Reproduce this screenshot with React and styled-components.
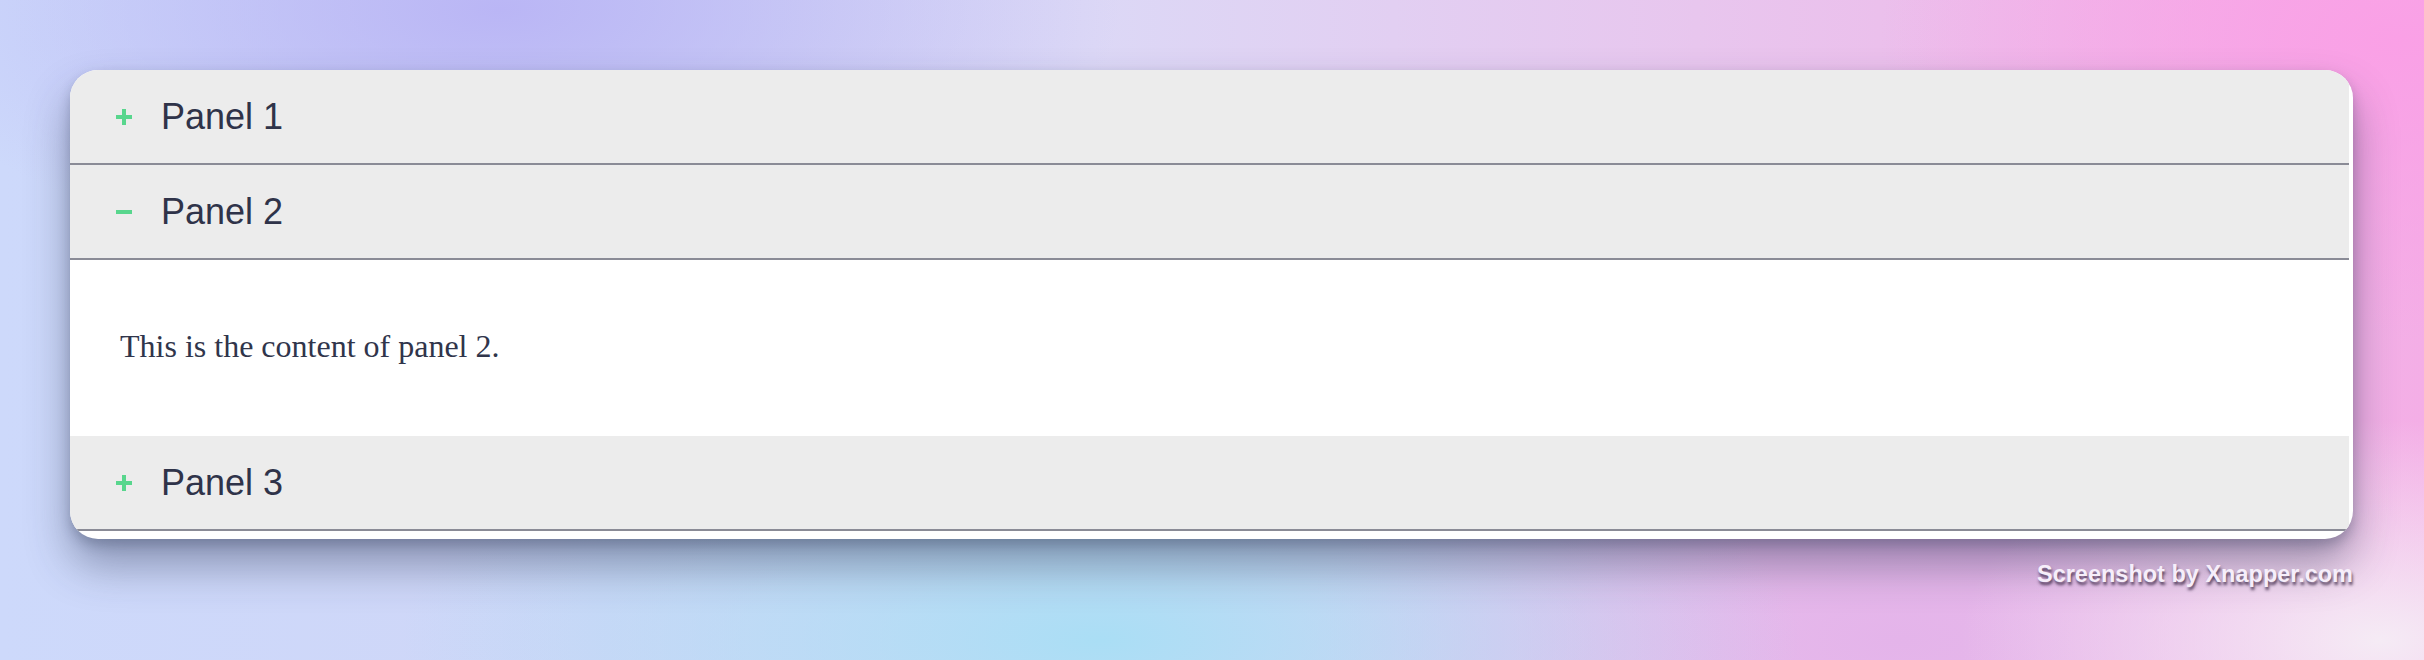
import styled, { createGlobalStyle } from "styled-components";
import { useState } from "react";

const GlobalStyle = createGlobalStyle`
  html, body {
    margin: 0;
    padding: 0;
  }
  body {
    width: 2424px;
    height: 660px;
    overflow: hidden;
    font-family: "Liberation Sans", Arial, sans-serif;
  }
`;

const panels = [
  { id: 1, title: "Panel 1", body: "This is the content of panel 1." },
  { id: 2, title: "Panel 2", body: "This is the content of panel 2." },
  { id: 3, title: "Panel 3", body: "This is the content of panel 3." },
];

export default function App() {
  const [open, setOpen] = useState(2);

  return (
    <>
      <GlobalStyle />
      <Backdrop>
        <Card>
          <Accordion>
            {panels.map((p) => (
              <Item key={p.id}>
                <Header onClick={() => setOpen(open === p.id ? null : p.id)}>
                  <Toggle open={open === p.id} />
                  <Title>{p.title}</Title>
                </Header>
                {open === p.id && (
                  <Content>
                    <p>{p.body}</p>
                  </Content>
                )}
              </Item>
            ))}
          </Accordion>
        </Card>
        <Watermark>Screenshot by Xnapper.com</Watermark>
      </Backdrop>
    </>
  );
}

function Toggle({ open }) {
  return (
    <Icon width="16" height="16" viewBox="0 0 16 16">
      <rect x="0" y="6" width="16" height="4" fill="#58d68d" />
      {!open && <rect x="6" y="0" width="4" height="16" fill="#58d68d" />}
    </Icon>
  );
}

const Backdrop = styled.div`
  width: 2424px;
  height: 660px;
  box-sizing: border-box;
  padding: 70px 71px 0 70px;
  display: flex;
  flex-direction: column;
  align-items: stretch;
  background:
    radial-gradient(ellipse 620px 260px at 500px 10px, rgba(185, 180, 245, 0.95), rgba(185, 180, 245, 0) 100%),
    radial-gradient(ellipse 700px 260px at 1100px 640px, rgba(170, 222, 245, 1), rgba(170, 222, 245, 0) 100%),
    radial-gradient(ellipse 520px 300px at 2400px 40px, rgba(250, 160, 230, 1), rgba(250, 160, 230, 0) 100%),
    radial-gradient(ellipse 420px 220px at 2380px 640px, rgba(245, 235, 245, 1), rgba(245, 235, 245, 0) 100%),
    radial-gradient(ellipse 600px 260px at 1900px 640px, rgba(228, 180, 234, 1), rgba(228, 180, 234, 0) 100%),
    linear-gradient(90deg, #cdd9fb 0%, #cfd6f7 25%, #dcd8f6 45%, #e8c6ee 70%, #f4aee6 100%);
`;

const Card = styled.div`
  background: #ffffff;
  border-radius: 28px;
  overflow: hidden;
  padding: 0 4px 8px 0;
  box-shadow: 0 26px 44px rgba(40, 50, 80, 0.42), 0 6px 12px rgba(40, 50, 80, 0.25);
`;

const Accordion = styled.div`
  display: flex;
  flex-direction: column;
`;

const Item = styled.div`
  display: flex;
  flex-direction: column;
`;

const Header = styled.div`
  height: 93px;
  display: flex;
  align-items: center;
  gap: 29px;
  padding-left: 46px;
  background: #ececec;
  border-bottom: 2px solid #8a8b96;
  cursor: pointer;
`;

const Icon = styled.svg`
  display: block;
  flex-shrink: 0;
`;

const Title = styled.span`
  font-family: "Liberation Sans", Arial, sans-serif;
  font-size: 36px;
  color: #2f3349;
`;

const Content = styled.div`
  background: #ffffff;
  padding: 68px 50px 71px;
  p {
    margin: 0;
    font-family: "Liberation Serif", "Times New Roman", serif;
    font-size: 32px;
    color: #30354b;
  }
`;

const Watermark = styled.div`
  align-self: flex-end;
  margin-top: 22px;
  font-family: "Liberation Sans", Arial, sans-serif;
  font-weight: bold;
  font-size: 23.5px;
  color: #f6eefa;
  text-shadow: 1px 3px 3px rgba(60, 40, 70, 0.85);
`;
